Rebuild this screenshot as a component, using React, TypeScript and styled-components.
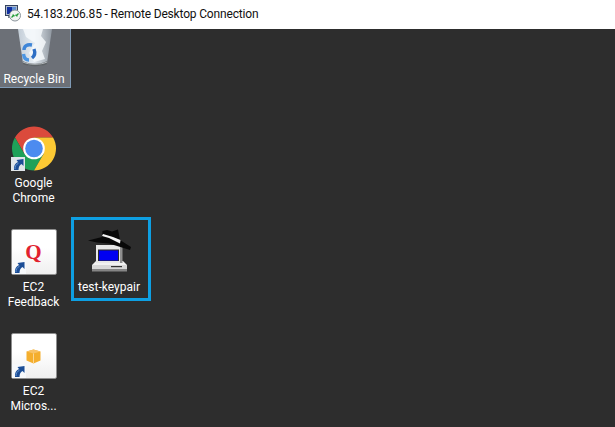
import React from 'react';
import styled, {createGlobalStyle} from "styled-components";

const GlobalStyle = createGlobalStyle`
  html, body {
    margin: 0;
    padding: 0;
    background: #2d2d2d;
  }
  body {
    font-family: Roboto, "Noto Sans", sans-serif;
  }
`

const ShortcutArrow = ({bg = '#f7f9fb'}: {bg?: string}) => (
    <ArrowBadge>
        <svg width="14" height="14" viewBox="0 0 14 14">
            <rect width="14" height="14" fill={bg}/>
            <path d="M3 13 C2.5 9 4 6.5 7 5 L5.5 3 L12.5 2 L12.5 9 L10.5 7 C8.5 8 7.5 10 7.5 13 Z" fill="#1b4d96"/>
            <path d="M4 12 C3.8 9.5 5 7.5 7.5 6.2" stroke="#6a9ad6" strokeWidth="0.9" fill="none"/>
        </svg>
    </ArrowBadge>
)

const RdpIcon = () => (
    <svg width="16" height="17" viewBox="0 0 16 17">
        <rect x="0.5" y="0.5" width="12" height="10" fill="#aebbcc" stroke="#35435e"/>
        <rect x="2" y="2" width="5" height="7" fill="#12309f"/>
        <rect x="7" y="2" width="4" height="7" fill="#5f8fd8"/>
        <rect x="3" y="11" width="6" height="2" fill="#7d8794"/>
        <circle cx="10" cy="10.5" r="5.5" fill="#f1f4f2" stroke="#8b949c"/>
        <path d="M6.5 12.5 L9 10 M9 10 L7.4 10 M9 10 L9 11.6" stroke="#1f9a35" strokeWidth="1.2" fill="none"/>
        <path d="M13.5 8.5 L11 11 M11 11 L12.6 11 M11 11 L11 9.4" stroke="#1f9a35" strokeWidth="1.2" fill="none"/>
    </svg>
)

const BinIcon = () => (
    <svg width="37" height="39" viewBox="0 0 37 39">
        <defs>
            <linearGradient id="binBody" x1="0" x2="1" y1="0" y2="0">
                <stop offset="0" stopColor="#c2ccd6"/>
                <stop offset="0.45" stopColor="#e6edf3"/>
                <stop offset="1" stopColor="#8f97a0"/>
            </linearGradient>
        </defs>
        <path d="M1 0 L35 0 L30 34 C25 38 11 38 6 34 Z" fill="url(#binBody)"/>
        <path d="M6 0 L26 0 L24 7 L29 13 L25 22 L28 30 L17 33 L12 24 L18 14 L9 8 Z" fill="#f6f9fb" opacity="0.85"/>
        <path d="M6 32 C12 35.5 24 35.5 30 32 L30 35 C25 38 11 38 6 35 Z" fill="#5f6468"/>
        <path d="M6 33 C12 36 24 36 30 33" stroke="#c9ced2" strokeWidth="0.8" fill="none"/>
        <g fill="none" strokeWidth="3.4">
            <path d="M7 21 C7 17 10 15 15 16" stroke="#3f86d8"/>
            <path d="M17 20 C18.5 24 17.5 27 15 29" stroke="#2f6fc4"/>
            <path d="M12 31 C9 31 7 29 6.5 25" stroke="#4b95e2"/>
        </g>
    </svg>
)

const ChromeIcon = () => (
    <svg width="44" height="45" viewBox="0 0 44 45">
        <path d="M22 11.5 L41.05 11.5 A22 22 0 0 0 2.95 11.5 L12.47 28 Z" fill="#db4a3c"/>
        <path d="M2.95 11.5 A22 22 0 0 0 22 44.5 L31.53 28 L12.47 28 Z" fill="#1fa159"/>
        <path d="M22 44.5 A22 22 0 0 0 41.05 11.5 L22 11.5 L31.53 28 Z" fill="#fcc934"/>
        <circle cx="22" cy="22.5" r="10.8" fill="#fff"/>
        <circle cx="22" cy="22.5" r="8.8" fill="#4c8bf0"/>
    </svg>
)

const SpyIcon = () => (
    <svg width="48" height="46" viewBox="0 0 48 46">
        <path d="M7 37 L11 33 L38 33 L42 37 Z" fill="#f2f2f2"/>
        <rect x="7" y="37" width="35" height="4" fill="#d8d8d8"/>
        <rect x="7" y="41" width="35" height="2.5" fill="#858585"/>
        <rect x="26" y="38" width="11" height="1.2" fill="#333"/>
        <rect x="11" y="17" width="26" height="18" fill="#e8e8e8"/>
        <rect x="35" y="17" width="2.5" height="18" fill="#8f8f8f"/>
        <rect x="13" y="21.5" width="21" height="11.5" fill="#2a2a2a"/>
        <rect x="14" y="22.5" width="19" height="10" fill="#0000f2"/>
        <path d="M3 12.5 L17 9 L17.5 3 L22 2 L27 3.5 L33 1.5 L35 12 L46 19 L45 22 L37 19.5 L24 15.5 L12 14.5 Z" fill="#080808"/>
        <path d="M17 8 L24 10 L35 15.5 L35.5 12 L28 9 L18 6 Z" fill="#f4f4f4"/>
    </svg>
)

const CubeIcon = () => (
    <svg width="15" height="15" viewBox="0 0 15 15">
        <path d="M7.5 0.5 L14.5 2.5 L14.5 11.5 L7.5 14.5 L0.5 11.5 L0.5 2.5 Z" fill="#f4ae2d"/>
        <path d="M0.5 2.5 L7.5 0.5 L14.5 2.5 L7.5 4.5 Z" fill="#f8c265"/>
        <path d="M7 4.5 H8 V14.5 H7 Z" fill="#fbd694"/>
    </svg>
)

export default function App() {
    return (
        <Screen>
            <GlobalStyle/>
            <TitleBar>
                <RdpIcon/>
                <TitleText>54.183.206.85 - Remote Desktop Connection</TitleText>
            </TitleBar>
            <Desktop>
                <IconColumn>
                    <BinTile>
                        <BinIcon/>
                        <BinLabel>Recycle Bin</BinLabel>
                    </BinTile>
                    <Shortcut $height={103}>
                        <IconBox>
                            <ChromeIcon/>
                            <ShortcutArrow bg="#dfe5ea"/>
                        </IconBox>
                        <Label>Google<br/>Chrome</Label>
                    </Shortcut>
                    <Shortcut $height={104}>
                        <WhiteTile>
                            <QuoteMark>Q</QuoteMark>
                            <ShortcutArrow/>
                        </WhiteTile>
                        <Label>EC2<br/>Feedback</Label>
                    </Shortcut>
                    <Shortcut $height={94}>
                        <WhiteTile>
                            <CubeIcon/>
                            <ShortcutArrow/>
                        </WhiteTile>
                        <Label>EC2<br/>Micros...</Label>
                    </Shortcut>
                </IconColumn>
                <SelectedColumn>
                    <SelectedItem>
                        <SpySlot>
                            <SpyIcon/>
                        </SpySlot>
                        <SelectedLabel>test-keypair</SelectedLabel>
                    </SelectedItem>
                </SelectedColumn>
            </Desktop>
        </Screen>
    );
}

const Screen = styled.div`
  width: 615px;
  height: 427px;
  display: flex;
  flex-direction: column;
  overflow: hidden;
`

const TitleBar = styled.header`
  height: 29px;
  flex-shrink: 0;
  box-sizing: border-box;
  padding: 0 0 2px 5px;
  display: flex;
  align-items: center;
  gap: 6px;
  background: #fff;
`

const TitleText = styled.span`
  font-size: 12px;
  letter-spacing: -0.17px;
  color: #111;
  white-space: nowrap;
`

const Desktop = styled.main`
  flex: 1;
  display: flex;
  background: #2d2d2d;
`

const IconColumn = styled.div`
  width: 71px;
  display: flex;
  flex-direction: column;
`

const BinTile = styled.div`
  height: 59px;
  box-sizing: border-box;
  margin-bottom: 38px;
  padding-left: 17px;
  display: flex;
  flex-direction: column;
  background: #6c7077;
  border-right: 1px solid #7f9ab5;
  border-bottom: 1px solid #7f9ab5;
`

const Label = styled.div`
  margin-top: 5px;
  font-size: 12px;
  line-height: 15px;
  color: #fff;
  text-align: center;
`

const BinLabel = styled(Label)`
  margin: 3px 0 0 -19px;
  line-height: 16px;
`

const Shortcut = styled.div<{$height: number}>`
  height: ${p => p.$height}px;
  padding-right: 4px;
  display: flex;
  flex-direction: column;
  align-items: center;
`

const IconBox = styled.div`
  position: relative;
  width: 46px;
  height: 45px;
  display: flex;
  justify-content: center;
`

const WhiteTile = styled.div`
  position: relative;
  width: 46px;
  height: 46px;
  box-sizing: border-box;
  display: flex;
  align-items: center;
  justify-content: center;
  background: linear-gradient(#ffffff 40%, #efefef);
  border: 1px solid #8f8f8f;
  border-radius: 2px;
`

const ArrowBadge = styled.span`
  position: absolute;
  left: 0;
  bottom: 0;
  width: 14px;
  height: 14px;
  display: block;
  line-height: 0;
`

const QuoteMark = styled.span`
  font-family: "Liberation Serif", serif;
  font-weight: bold;
  font-size: 21px;
  line-height: 1;
  color: #e1222e;
`

const SelectedColumn = styled.div`
  padding-top: 188px;
`

const SelectedItem = styled.div`
  width: 80px;
  height: 84px;
  box-sizing: border-box;
  border: 3px solid #0e9fe2;
  display: flex;
  flex-direction: column;
  align-items: center;
`

const SpySlot = styled.div`
  height: 46px;
  margin: 8px 4px 0 0;
  line-height: 0;
`

const SelectedLabel = styled.div`
  margin: 6px 4px 0 0;
  font-size: 12px;
  line-height: 15px;
  color: #fff;
`
